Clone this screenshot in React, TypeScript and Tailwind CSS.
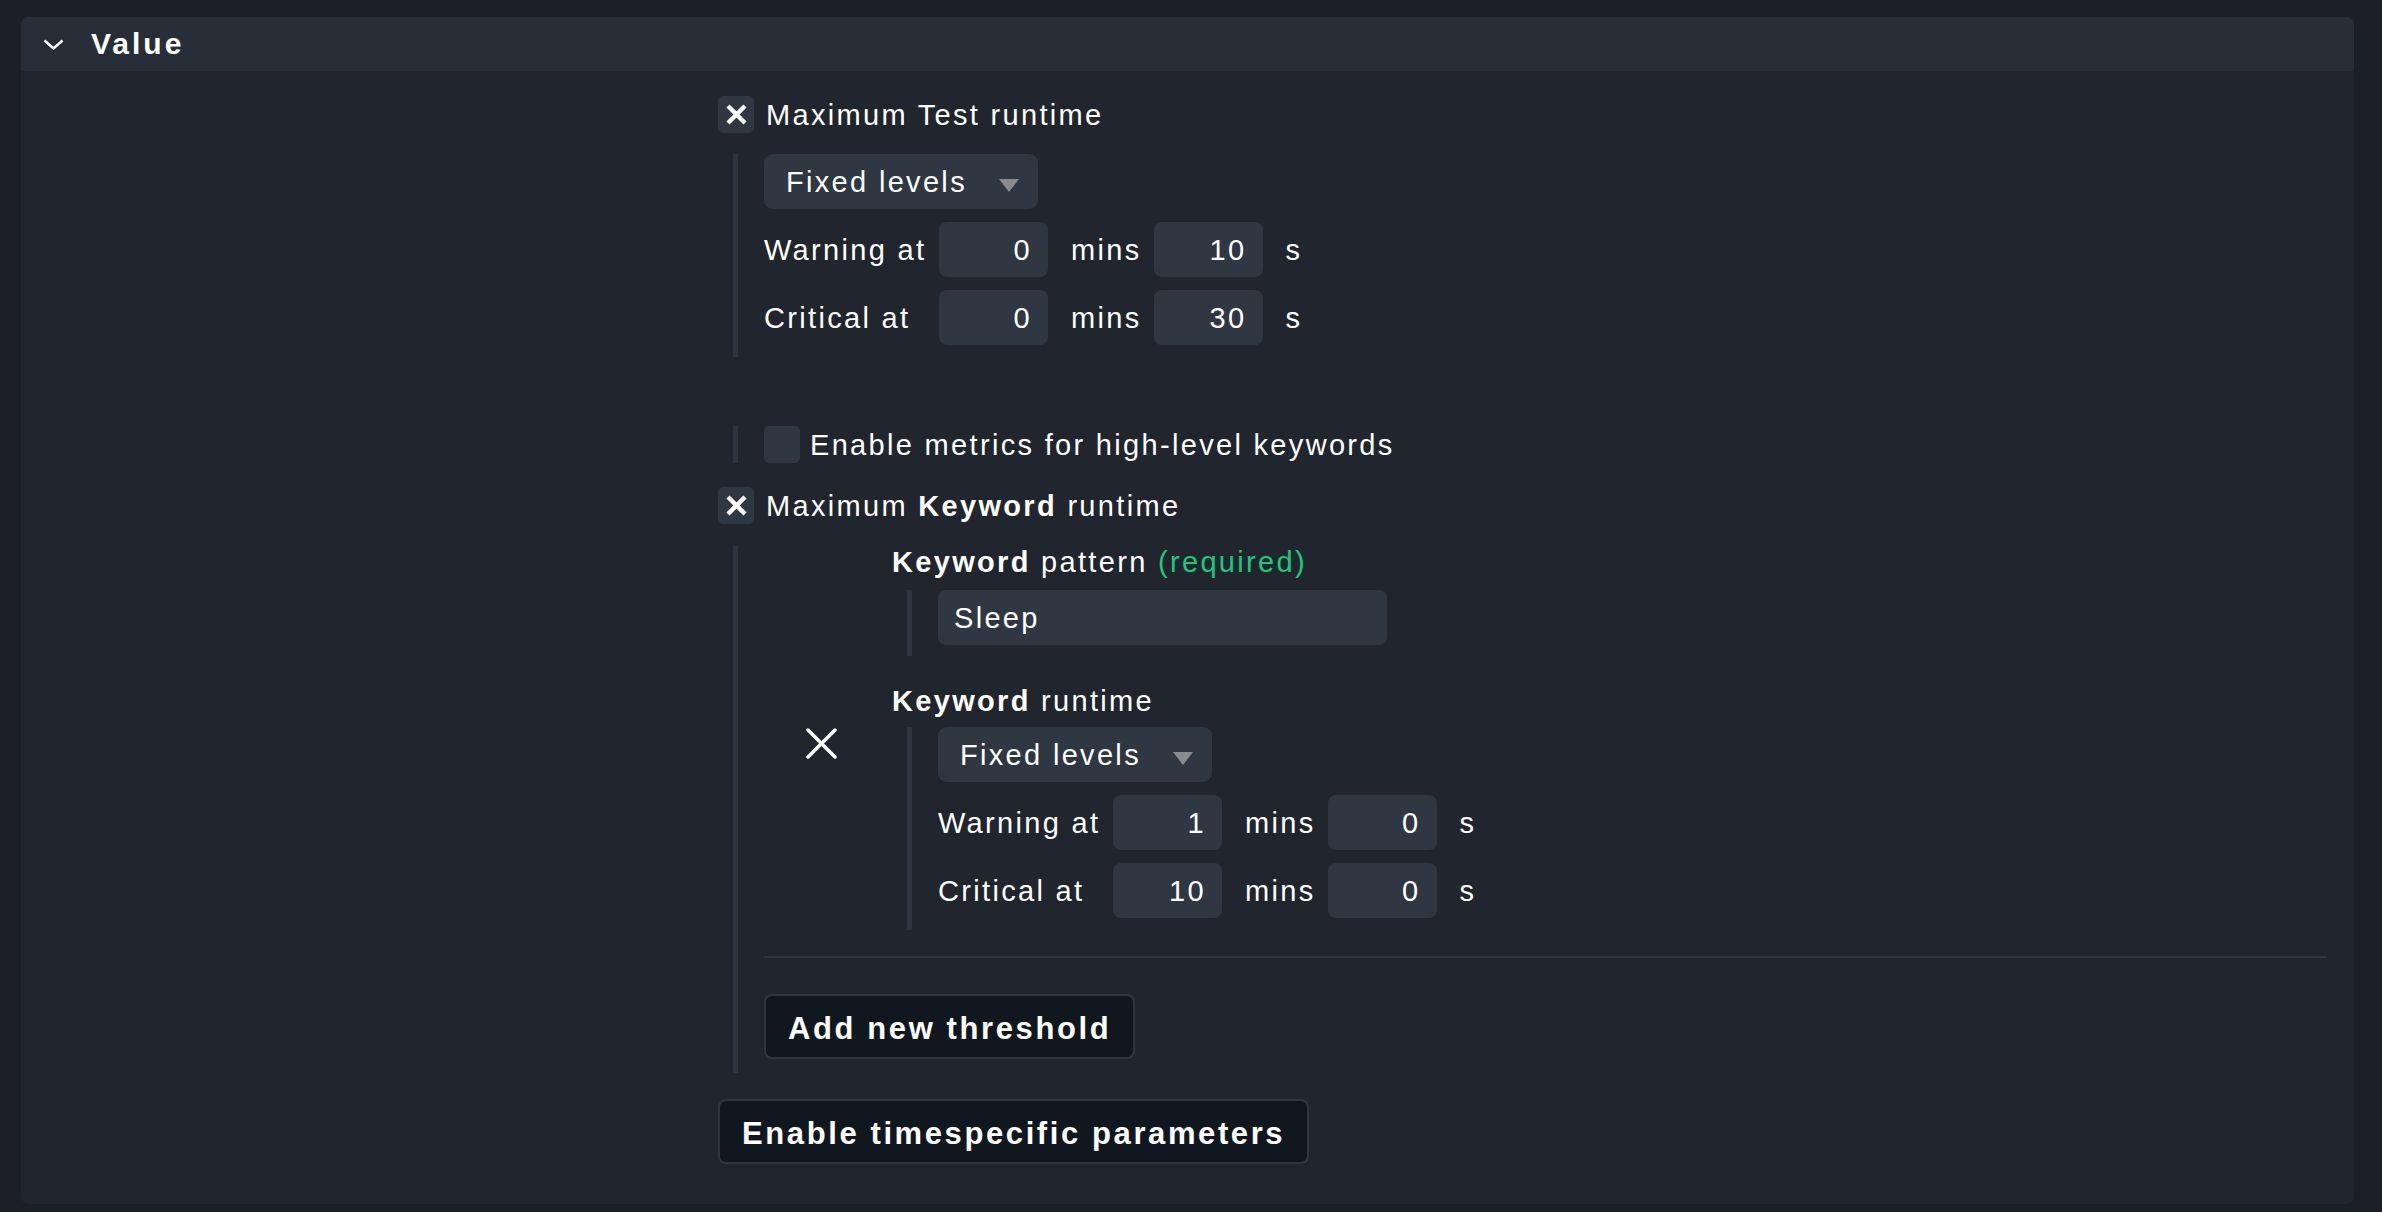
import React from 'react';

const XMark: React.FC<{ size: number; stroke: number; round?: boolean }> = ({ size, stroke, round }) => (
  <svg width={size} height={size} viewBox={`0 0 ${size} ${size}`} fill="none">
    <path
      d={`M2 2 L${size - 2} ${size - 2} M${size - 2} 2 L2 ${size - 2}`}
      stroke="#ffffff"
      strokeWidth={stroke}
      strokeLinecap={round ? 'round' : 'butt'}
    />
  </svg>
);

const Checkbox: React.FC<{ checked?: boolean }> = ({ checked }) => (
  <div className="w-[36px] h-[37px] shrink-0 rounded-[5px] bg-[#2f3743] flex items-center justify-center">
    {checked && <XMark size={21} stroke={4.5} />}
  </div>
);

const Dropdown: React.FC = () => (
  <div className="w-[274px] h-[55px] rounded-[9px] bg-[#2f3743] flex items-center justify-between pl-[22px] pr-[19px]">
    <span>Fixed levels</span>
    <svg width="20" height="13" viewBox="0 0 20 13" className="mt-[8px]">
      <polygon points="0,0 20,0 10,13" fill="#8b8b8b" />
    </svg>
  </div>
);

const NumInput: React.FC<{ value: string }> = ({ value }) => (
  <div className="w-[109px] h-[55px] rounded-[8px] bg-[#2f3743] flex items-center justify-end pr-[16px]">
    {value}
  </div>
);

const LevelRow: React.FC<{ label: string; mins: string; secs: string }> = ({ label, mins, secs }) => (
  <div className="flex items-center h-[55px]">
    <span className="w-[175px] shrink-0">{label}</span>
    <NumInput value={mins} />
    <span className="ml-[23px]">mins</span>
    <div className="ml-[12px]">
      <NumInput value={secs} />
    </div>
    <span className="ml-[23px]">s</span>
  </div>
);

const Levels: React.FC<{ warn: [string, string]; crit: [string, string] }> = ({ warn, crit }) => (
  <div className="ml-[15px] border-l-[5px] border-[#2e3540] pl-[26px] pb-[12px] flex flex-col gap-[13px]">
    <Dropdown />
    <LevelRow label="Warning at" mins={warn[0]} secs={warn[1]} />
    <LevelRow label="Critical at" mins={crit[0]} secs={crit[1]} />
  </div>
);

const Button: React.FC<{ children: React.ReactNode }> = ({ children }) => (
  <div className="inline-flex items-center h-[65px] px-[22px] pt-[4px] border-2 border-[#2f3640] rounded-[8px] bg-[#11171e] font-bold text-[31px] tracking-[2.6px]">
    {children}
  </div>
);

export default function App() {
  return (
    <div className="min-h-screen bg-[#1d1f26] pt-[17px] pl-[21px] pr-[28px] font-['Liberation_Sans',Arial,sans-serif] text-white text-[29px] tracking-[0.08em] leading-[32px]">
      <div className="rounded-[8px] overflow-hidden bg-[#21262e]">
        {/* Header */}
        <div className="h-[54px] bg-[#272e38] flex items-center pl-[22px]">
          <svg width="21" height="11" viewBox="0 0 21 11" fill="none">
            <polyline points="1.5,1.5 10.5,9.5 19.5,1.5" stroke="#ffffff" strokeWidth="2.5" />
          </svg>
          <span className="ml-[27px] font-bold text-[30px] tracking-[0.1em]">Value</span>
        </div>

        {/* Body */}
        <div className="pl-[697px] pr-[27px] pt-[25px] pb-[40px]">
          <div className="flex items-center gap-[12px]">
            <Checkbox checked />
            <span>Maximum Test runtime</span>
          </div>

          <div className="mt-[21px]">
            <Levels warn={['0', '10']} crit={['0', '30']} />
          </div>

          <div className="mt-[69px] ml-[15px] border-l-[5px] border-[#2e3540] pl-[26px] flex items-center gap-[10px]">
            <Checkbox />
            <span>Enable metrics for high-level keywords</span>
          </div>

          <div className="mt-[24px] flex items-center gap-[12px]">
            <Checkbox checked />
            <span>
              Maximum <b>Keyword</b> runtime
            </span>
          </div>

          <div className="mt-[22px] ml-[15px] border-l-[5px] border-[#2e3540] pl-[26px] pb-[14px]">
            {/* list entry */}
            <div className="flex pb-[13px]">
              <div className="w-[128px] shrink-0 flex items-center pl-[42px] pt-[10px]">
                <XMark size={31} stroke={3.5} round />
              </div>
              <div className="flex-1">
                <div className="h-[32px]">
                  <b>Keyword</b> pattern <span className="text-[#1fc77e]">(required)</span>
                </div>
                <div className="mt-[12px] ml-[15px] border-l-[5px] border-[#2e3540] pl-[26px] pb-[11px]">
                  <div className="w-[449px] h-[55px] rounded-[8px] bg-[#2f3743] flex items-center pl-[16px]">
                    Sleep
                  </div>
                </div>
                <div className="mt-[29px] h-[32px]">
                  <b>Keyword</b> runtime
                </div>
                <div className="mt-[10px]">
                  <Levels warn={['1', '0']} crit={['10', '0']} />
                </div>
              </div>
            </div>

            <div className="mt-[13px] h-[2px] bg-[#2e3540]" />

            <div className="mt-[36px]">
              <Button>Add new threshold</Button>
            </div>
          </div>

          <div className="mt-[26px]">
            <Button>Enable timespecific parameters</Button>
          </div>
        </div>
      </div>
    </div>
  );
}
